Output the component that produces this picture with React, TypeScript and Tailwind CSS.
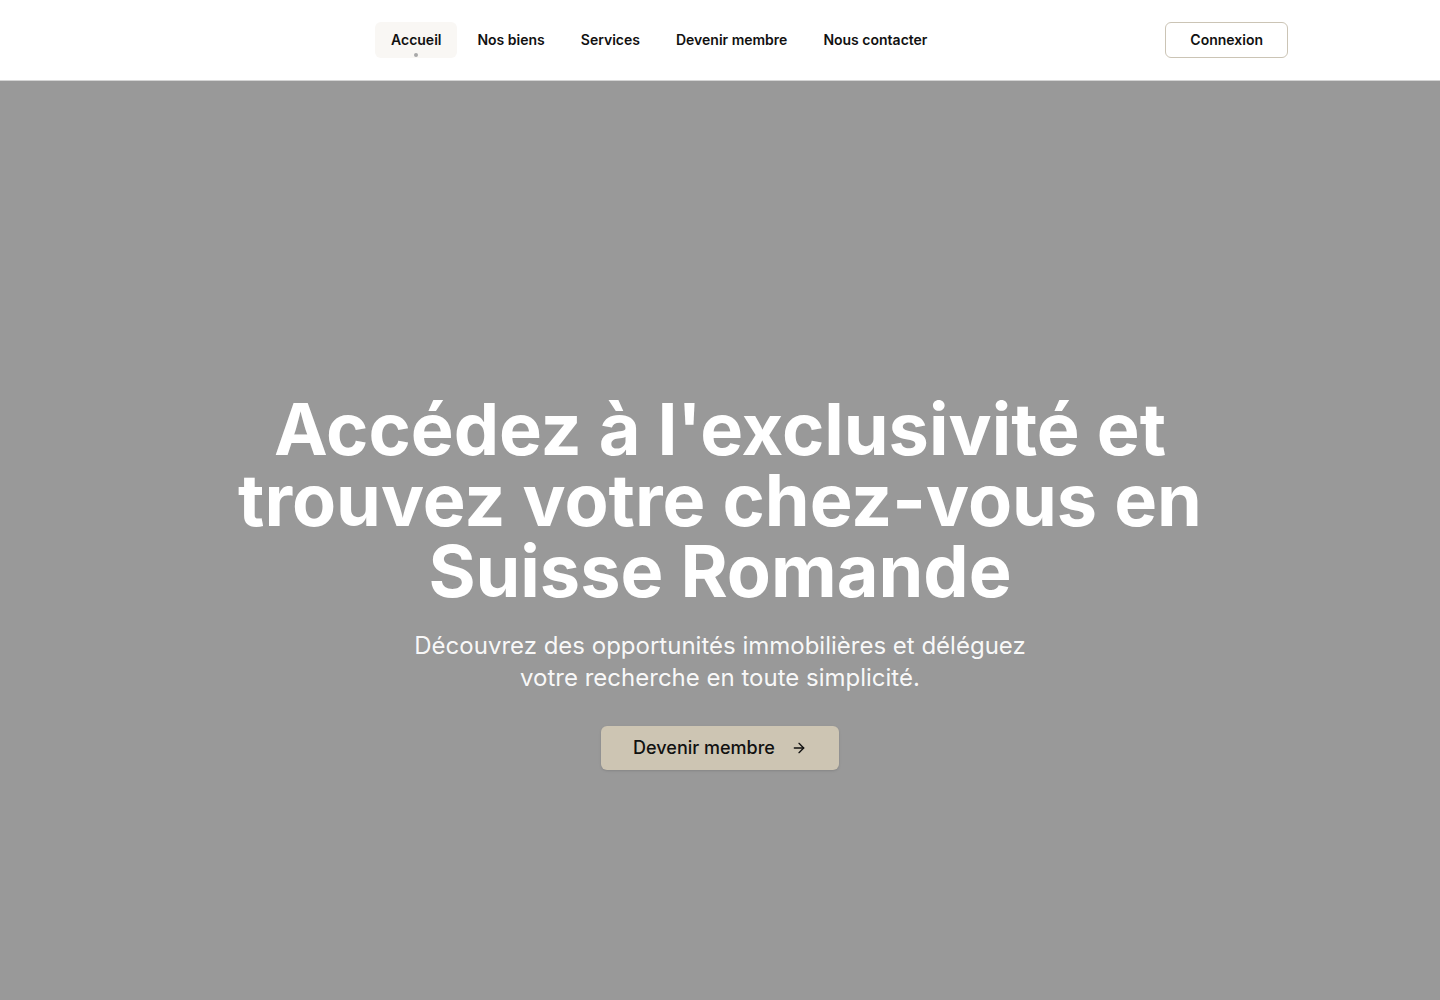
import { ArrowRight } from 'lucide-react';

const NAV = ['Accueil', 'Nos biens', 'Services', 'Devenir membre', 'Nous contacter'];

function Header() {
  return (
    <header className="h-[81px] bg-white border-b border-[#d4d4d4]">
      <div className="max-w-[1136px] mx-auto h-full flex items-center">
        {/* logo slot (image not loaded) */}
        <div className="w-[223px] h-10" />
        <nav className="flex items-center gap-1">
          {NAV.map((item, i) => (
            <a
              key={item}
              href="#"
              className={
                i === 0
                  ? 'relative h-9 px-4 flex items-center rounded-md bg-[#f9f7f4] text-sm font-semibold text-[#111]'
                  : 'relative h-9 px-4 flex items-center rounded-md text-sm font-semibold text-[#111]'
              }
            >
              {item}
              {i === 0 && (
                <span className="absolute left-1/2 -translate-x-1/2 bottom-[1px] w-1 h-1 rounded-full bg-[#a8a8a8]" />
              )}
            </a>
          ))}
        </nav>
        <button className="ml-auto h-9 px-6 rounded-md border border-[#cbc4b5] bg-white text-sm font-semibold text-[#111]">
          Connexion
        </button>
      </div>
    </header>
  );
}

function Hero() {
  return (
    <section className="h-[1000px] bg-[#999999] flex flex-col items-center justify-center text-center px-6">
      <h1 className="text-[72px] leading-[71px] font-bold text-white max-w-[1000px]">
        Accédez à l'exclusivité et trouvez votre chez-vous en Suisse Romande
      </h1>
      <p className="mt-6 text-2xl leading-8 text-white/95 max-w-[640px]">
        Découvrez des opportunités immobilières et déléguez votre recherche en toute simplicité.
      </p>
      <button className="mt-8 h-11 px-8 rounded-md bg-[#cdc5b3] text-lg font-medium text-[#111] flex items-center gap-4 shadow-sm">
        Devenir membre
        <ArrowRight className="w-4 h-4" strokeWidth={2} />
      </button>
    </section>
  );
}

export default function App() {
  return (
    <div className="min-h-screen bg-white" style={{ fontFamily: 'Inter, "Noto Sans", sans-serif' }}>
      <Header />
      <Hero />
    </div>
  );
}
